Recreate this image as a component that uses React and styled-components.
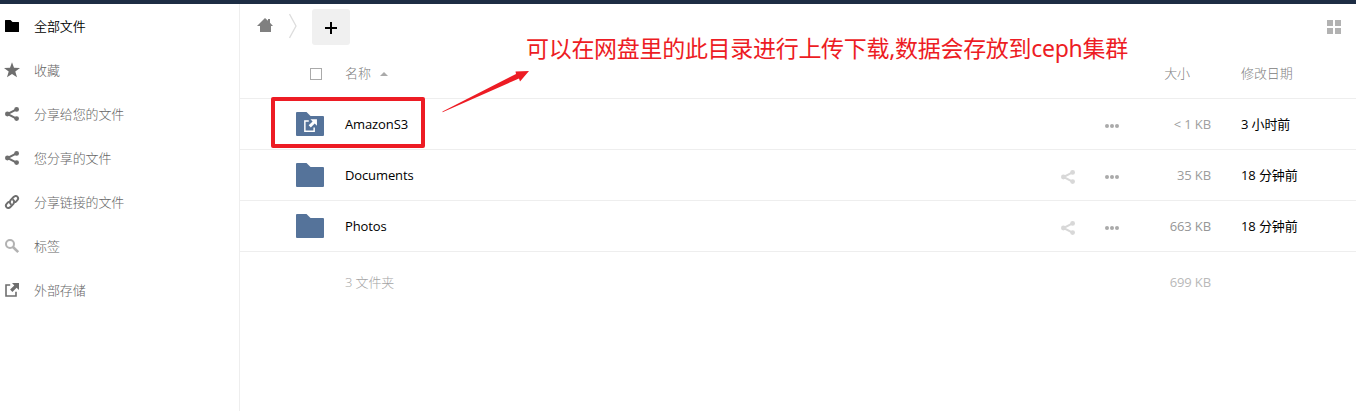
import React from "react";
import styled, { createGlobalStyle } from "styled-components";

const GlobalStyle = createGlobalStyle`
  * { box-sizing: border-box; }
  body {
    margin: 0;
    overflow: hidden;
    background: #fff;
    color: #000;
    font: 13px/20px "Open Sans", "Noto Sans CJK SC", sans-serif;
    letter-spacing: -0.12px;
  }
`;

const Page = styled.div`
  position: relative;
  height: 411px;
  display: flex;
  flex-direction: column;
`;
const TopBar = styled.header`
  height: 4px;
  flex: none;
  background: #1d2d44;
`;
const Body = styled.div`
  flex: 1;
  display: flex;
`;
const Sidebar = styled.nav`
  width: 240px;
  flex: none;
  border-right: 1px solid #eee;
`;
const NavItem = styled.a`
  height: 44px;
  padding-left: 4px;
  display: flex;
  align-items: center;
  gap: 14px;
  color: ${(p) => (p.$active ? "#000" : "#666")};
  font-weight: ${(p) => (p.$active ? 350 : 300)};
`;
const NavLabel = styled.span`
  padding-bottom: 1px;
`;
const Icon = styled.svg`
  width: 16px;
  height: 16px;
  flex: none;
  display: block;
  overflow: visible;
  color: ${(p) => p.$color || "#6e6e6e"};
`;
const Main = styled.main`
  flex: 1;
  display: flex;
  flex-direction: column;
`;
const Controls = styled.div`
  height: 44px;
  padding: 5px 14px 0 17px;
  display: flex;
  align-items: flex-start;
`;
const HomeLink = styled.a`
  padding-top: 8px;
`;
const Crumb = styled.svg`
  width: 8px;
  height: 26px;
  margin: 4px 0 0 16px;
`;
const AddButton = styled.button`
  width: 38px;
  height: 36px;
  margin-left: 15px;
  padding: 2px 0 0;
  border: 0;
  border-radius: 3px;
  background: #f0f0f0;
  display: flex;
  align-items: center;
  justify-content: center;
`;
const ViewToggle = styled.div`
  margin: 11px 0 0 auto;
  padding-right: 1px;
  display: grid;
  grid-template-columns: 6px 6px;
  grid-auto-rows: 6px;
  gap: 2px;
`;
const Tile = styled.i`
  background: #b2b2b2;
`;
const Row = styled.div`
  height: 51px;
  display: grid;
  grid-template-columns: 105px 1fr 44px 44px 64px 145px;
  align-items: center;
  border-bottom: 1px solid #eee;
`;
const HeaderRow = styled(Row)`
  color: #808080;
  font-weight: 300;
`;
const SummaryRow = styled(Row)`
  height: 60px;
  border: 0;
  color: #a4a4a4;
  font-weight: 300;
`;
const IconCell = styled.div`
  padding-left: 56px;
`;
const NameCell = styled.div`
  display: flex;
  align-items: center;
  gap: 9px;
`;
const ActionCell = styled.div`
  padding: 4px 0 0 1px;
`;
const SizeCell = styled.div`
  text-align: right;
  padding-right: ${(p) => (p.$heading ? 21 : 0)}px;
  color: ${(p) => p.$tone || "#808080"};
  font-weight: ${(p) => (p.$heading ? 300 : 400)};
`;
const DateCell = styled.div`
  padding-left: 30px;
`;
const Checkbox = styled.span`
  display: block;
  width: 12px;
  height: 12px;
  margin: 1px 0 0 14px;
  border: 1px solid #aaa;
`;
const SortArrow = styled.i`
  margin-top: 2px;
  border: 4px solid transparent;
  border-top: 0;
  border-bottom-color: #aaa;
`;
const Folder = styled.svg`
  display: block;
  width: 28px;
  height: 24px;
`;
const Highlight = styled.div`
  position: absolute;
  left: 271px;
  top: 97px;
  width: 154px;
  height: 51px;
  border: 4px solid #ed1c24;
  border-radius: 2px;
`;
const Arrow = styled.svg`
  position: absolute;
  left: 440px;
  top: 66px;
  width: 92px;
  height: 50px;
`;
const Note = styled.p`
  position: absolute;
  left: 526px;
  top: 32px;
  margin: 0;
  color: #ed1c24;
  font: 23px/32px "Noto Sans", "Noto Sans CJK SC", sans-serif;
  letter-spacing: -0.3px;
  white-space: nowrap;
`;

const ShareIcon = ({ color }) => (
  <Icon viewBox="0 0 16 16" $color={color}>
    <path d="M12.5 3.4 3.5 8l9 4.6" fill="none" stroke="currentColor" strokeWidth="2" />
    <g fill="currentColor">
      <circle cx="12.6" cy="3.4" r="2.4" />
      <circle cx="3.4" cy="8" r="2.4" />
      <circle cx="12.6" cy="12.6" r="2.4" />
    </g>
  </Icon>
);
const DotsIcon = () => (
  <Icon viewBox="0 0 16 16" $color="#aaa">
    <g fill="currentColor">
      <circle cx="3" cy="8" r="2" />
      <circle cx="8" cy="8" r="2" />
      <circle cx="13" cy="8" r="2" />
    </g>
  </Icon>
);
const externalPath =
  "M6.2 2.2H1.2V14.8H12.8V9.8H11.2V13.2H2.8V3.8H6.2Z M8 1H15V8L12.6 5.7 8.4 9.9 6.1 7.6 10.3 3.4Z";

const navIcons = {
  folder: (
    <Icon viewBox="0 0 16 16" $color="#000">
      <path fill="currentColor" d="M1.5 2h5l2 2h6q.5 0 .5.5v9q0 .5-.5.5h-13q-.5 0-.5-.5v-11Q1 2 1.5 2Z" />
    </Icon>
  ),
  star: (
    <Icon viewBox="0 0 16 16">
      <path fill="currentColor" d="m8 .3 2 5.4 6 .2-4.7 3.7L13 15.2 8 11.9l-5 3.3 1.7-5.6L0 5.9l6-.2Z" />
    </Icon>
  ),
  share: <ShareIcon />,
  link: (
    <Icon viewBox="0 0 16 16">
      <g fill="none" stroke="currentColor" strokeWidth="1.9" strokeLinecap="round">
        <path d="M6.9 10.2C5.5 8.9 5.6 7.4 6.6 6.2L9.6 3C10.8 1.7 12.4 1.6 13.4 2.6s.9 2.5-.2 3.7l-1.7 1.8" />
        <path d="M9.1 5.8c1.4 1.3 1.3 2.8.3 4L6.4 13c-1.2 1.3-2.8 1.4-3.8.4s-.9-2.5.2-3.7l1.7-1.8" />
      </g>
    </Icon>
  ),
  search: (
    <Icon viewBox="0 0 16 16" $color="#b2b2b2">
      <g fill="none" stroke="currentColor">
        <circle cx="6" cy="6" r="4" strokeWidth="2" />
        <path d="m9 9 5.2 5.2" strokeWidth="2.6" />
      </g>
    </Icon>
  ),
  external: (
    <Icon viewBox="0 0 16 16">
      <path fill="currentColor" d={externalPath} />
    </Icon>
  ),
};

const navItems = [
  ["folder", "全部文件"],
  ["star", "收藏"],
  ["share", "分享给您的文件"],
  ["share", "您分享的文件"],
  ["link", "分享链接的文件"],
  ["search", "标签"],
  ["external", "外部存储"],
];

const files = [
  { name: "AmazonS3", size: "< 1 KB", date: "3 小时前", external: true, tone: "#a0a0a0" },
  { name: "Documents", size: "35 KB", date: "18 分钟前", tone: "#9c9c9c" },
  { name: "Photos", size: "663 KB", date: "18 分钟前", tone: "#969696" },
];

const FolderIcon = ({ external }) => (
  <Folder viewBox="0 0 28 24">
    <path fill="#55739a" d="M1 0h9.5l4 4H27q1 0 1 1v18q0 1-1 1H1q-1 0-1-1V1q0-1 1-1Z" />
    {external && (
      <path transform="translate(7 6.3) scale(.93)" fill="#fff" d={externalPath} />
    )}
  </Folder>
);

export default function App() {
  return (
    <Page>
      <GlobalStyle />
      <TopBar />
      <Body>
        <Sidebar>
          {navItems.map(([icon, label], i) => (
            <NavItem key={label} $active={i === 0}>
              {navIcons[icon]}
              <NavLabel>{label}</NavLabel>
            </NavItem>
          ))}
        </Sidebar>
        <Main>
          <Controls>
            <HomeLink>
              <Icon viewBox="0 0 16 16" $color="#808080">
                <path fill="currentColor" d="M8 1 11 3.8V2h2v3.8L16 9h-2v6H3V9H0Z" />
              </Icon>
            </HomeLink>
            <Crumb viewBox="0 0 8 26">
              <path d="m.5 1 6.5 12L.5 25" fill="none" stroke="#ddd" strokeWidth="1.3" />
            </Crumb>
            <AddButton aria-label="新建">
              <Icon viewBox="0 0 16 16" $color="#000">
                <path d="M8 2v12M2 8h12" stroke="currentColor" strokeWidth="2" />
              </Icon>
            </AddButton>
            <ViewToggle>
              <Tile /><Tile /><Tile /><Tile />
            </ViewToggle>
          </Controls>
          <HeaderRow>
            <IconCell><Checkbox /></IconCell>
            <NameCell>名称 <SortArrow /></NameCell>
            <span />
            <span />
            <SizeCell $heading>大小</SizeCell>
            <DateCell>修改日期</DateCell>
          </HeaderRow>
          {files.map((f) => (
            <Row key={f.name}>
              <IconCell><FolderIcon external={f.external} /></IconCell>
              <NameCell>{f.name}</NameCell>
              <ActionCell>{!f.external && <ShareIcon color="#d8d8d8" />}</ActionCell>
              <ActionCell><DotsIcon /></ActionCell>
              <SizeCell $tone={f.tone}>{f.size}</SizeCell>
              <DateCell>{f.date}</DateCell>
            </Row>
          ))}
          <SummaryRow>
            <span />
            <NameCell>3 文件夹</NameCell>
            <span />
            <span />
            <SizeCell $tone="#b9b9b9">699 KB</SizeCell>
            <span />
          </SummaryRow>
        </Main>
      </Body>
      <Highlight />
      <Arrow viewBox="0 0 92 50">
        <path d="M2.5 46.3 2.5 45.5 76 8 75.5 5.5 89 5 80 15.5 79 12.5Z" fill="#ed1c24" />
      </Arrow>
      <Note>可以在网盘里的此目录进行上传下载,数据会存放到ceph集群</Note>
    </Page>
  );
}
